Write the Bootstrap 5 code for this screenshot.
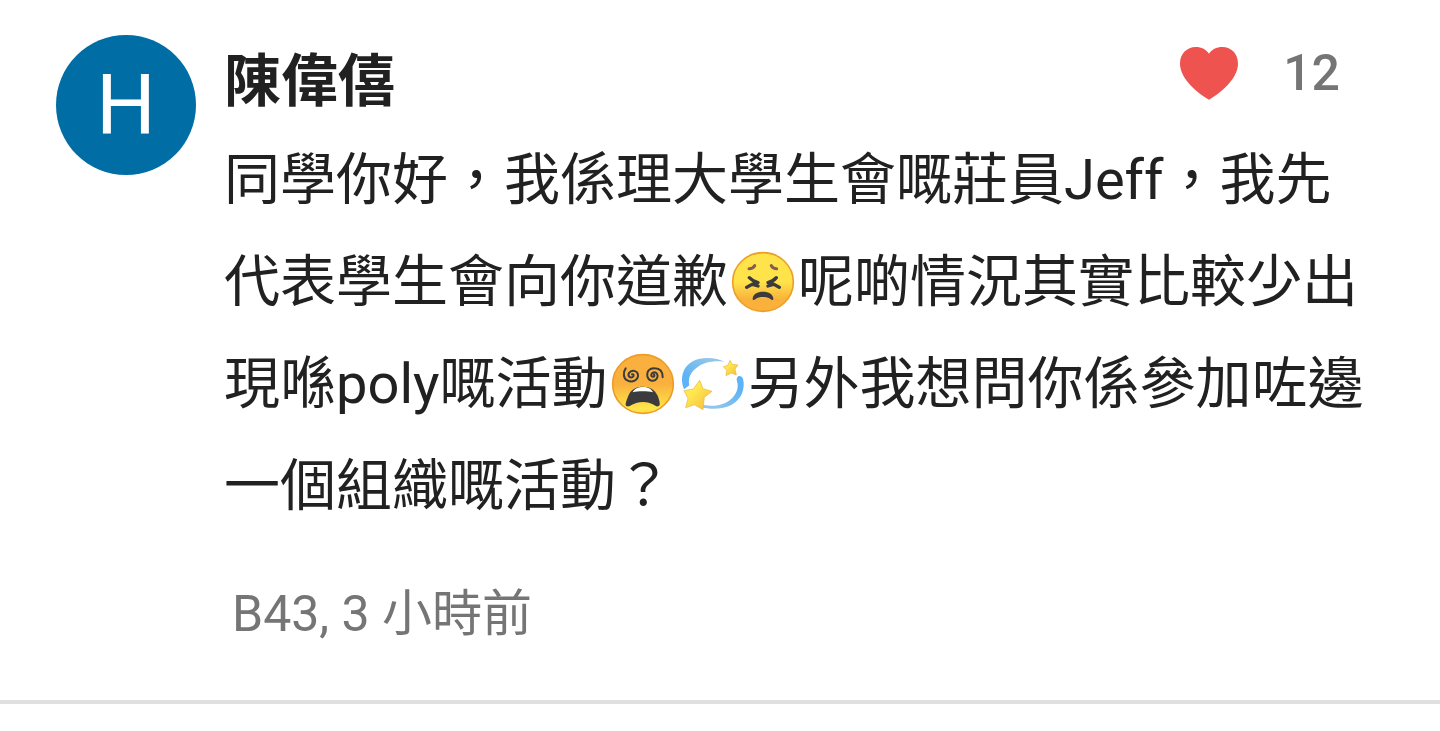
<!DOCTYPE html>
<html lang="zh-Hant-HK">
<head>
<meta charset="utf-8">
<meta name="viewport" content="width=device-width, initial-scale=1">
<title>留言</title>
<link rel="stylesheet" href="https://cdn.jsdelivr.net/npm/bootstrap@5.3.0/dist/css/bootstrap.min.css">
<style>
  body { font-family: Roboto, "Noto Sans CJK TC", sans-serif; color: #212121; background: #fff; }
  .comment { padding: 35px 64px 36px 56px; border-bottom: 4px solid #e0e0e0; gap: 28px; }
  .avatar { width: 140px; height: 140px; background: #006da5; font-size: 84px; line-height: 140px; }
  .author { font-size: 57px; line-height: 94px; }
  .message { font-size: 56px; line-height: 102px; }
  .emoji { width: 70px; height: 70px; vertical-align: -16px; }
  .like { color: #757575; font-size: 50px; line-height: 76px; gap: 44px; margin-right: 36px; }
  .heart { width: 60px; height: 56px; }
  .meta { color: #757575; font-size: 50px; line-height: 74px; padding: 40px 0 13px 8px; }
</style>
</head>
<body>
<main>
  <article class="comment d-flex align-items-start">
    <div class="avatar rounded-circle text-white text-center flex-shrink-0">H</div>
    <div class="flex-grow-1">
      <header class="d-flex justify-content-between align-items-start">
        <h1 class="author fw-bold m-0">陳偉僖</h1>
        <button type="button" class="like btn border-0 p-0 d-flex align-items-center fw-medium" aria-label="讚好 12">
          <svg class="heart" viewBox="54 44 180 168" aria-hidden="true"><path fill="#ef5350" d="M144 208C112 190 57 146 57 100C57 70 78 50 104 50C122 50 136 58 144 70C152 58 166 50 184 50C211 50 231 70 231 100C231 146 176 190 144 208Z"/></svg>
          <span>12</span>
        </button>
      </header>
      <p class="message m-0">同學你好，我係理大學生會嘅莊員Jeff，我先代表學生會向你道歉<svg class="emoji" viewBox="24 24 210 210" role="img" aria-label="難受">
          <defs><linearGradient id="yellow" x1="0" y1="0" x2="0" y2="1"><stop offset=".5" stop-color="#ffe34a"/><stop offset=".8" stop-color="#f9b13b"/></linearGradient></defs>
          <ellipse cx="129" cy="129" rx="91" ry="88" fill="url(#yellow)" stroke="#eda029" stroke-width="5"/>
          <g fill="none" stroke-linecap="round" stroke-linejoin="round">
            <path stroke="#855c52" stroke-width="9" d="M87 89Q99 89 104 80M154 80Q159 89 170 89"/>
            <path stroke="#3b3b3e" stroke-width="10" d="M88 116Q98 127 114 131Q96 134 80 145M98 136L114 141M169 116Q160 127 144 131Q162 134 178 145M160 136L144 141"/>
          </g>
          <path fill="#3b3b3e" d="M98 179C99 165 112 158 129 158C146 158 159 165 160 179C160 185 156 184 151 180C140 172 118 172 107 180C102 184 98 185 98 179Z"/>
        </svg>呢啲情況其實比較少出現喺poly嘅活動<svg class="emoji" viewBox="24 30 210 210" role="img" aria-label="暈眩的臉">
          <defs><linearGradient id="orange" x1="0" y1="0" x2="0" y2="1"><stop offset=".5" stop-color="#f9b03e"/><stop offset=".9" stop-color="#ffe34a"/></linearGradient></defs>
          <ellipse cx="129" cy="135" rx="91" ry="88" fill="url(#orange)" stroke="#ee9c25" stroke-width="5"/>
          <path fill="none" stroke="#3b3b3e" stroke-width="6" stroke-linecap="round" d="M77 88C69 99 69 119 82 124C97 132 115 123 114 108C113 94 94 91 87 102C82 112 91 118 98 114C103 111 101 104 96 106M188 115C188 98 181 88 164 88C149 87 140 96 142 111C145 127 164 130 171 118C176 107 170 100 162 100C153 101 151 112 158 113C163 114 165 109 162 107"/>
          <path fill="#3b3b3e" d="M82 202C72 201 79 186 85 170C93 150 110 143 129 143C149 143 165 152 173 170C179 185 183 201 174 202C165 204 159 189 129 189C99 189 92 204 82 202Z"/>
          <path fill="#fff" d="M98 160C103 149 115 144 129 144C143 144 154 149 159 160C143 156 114 156 98 160Z"/>
        </svg><svg class="emoji" viewBox="234 30 210 210" role="img" aria-label="流星">
          <defs>
            <linearGradient id="trailLeft" x1="0" y1="1" x2="1" y2="0"><stop offset=".25" stop-color="#5db3f7"/><stop offset=".8" stop-color="#91c6ea"/></linearGradient>
            <linearGradient id="trailRight" x1="0" y1="1" x2="1" y2="0"><stop offset=".2" stop-color="#91c6ea"/><stop offset=".75" stop-color="#5db3f7"/></linearGradient>
            <linearGradient id="star" x1="0" y1="0" x2="1" y2="1"><stop offset=".35" stop-color="#ffe84f"/><stop offset="1" stop-color="#f4b93e"/></linearGradient>
          </defs>
          <path fill="url(#trailLeft)" d="M252 151C239 119 247 84 278 67C306 52 348 55 374 68C343 64 310 69 290 86C269 102 264 119 268 139Z"/>
          <path fill="url(#trailRight)" d="M411 126C406 111 423 104 429 119C437 149 423 182 395 197C373 210 336 213 304 205L310 198C341 203 370 199 391 182C410 166 417 148 411 126Z"/>
          <g fill="url(#star)" stroke="#edb43c" stroke-width="2" stroke-linejoin="round">
            <path d="M299 124L309 149L336 157L313 175L309 212L283 197L257 206L264 178L252 155L280 150Z"/>
            <path d="M390 64L397 76L414 78L405 90L409 108L394 102L378 110L380 94L370 83L384 79Z"/>
          </g>
        </svg>另外我想問你係參加咗邊一個組織嘅活動？</p>
      <footer class="meta">B43, 3 小時前</footer>
    </div>
  </article>
</main>
<script src="https://cdn.jsdelivr.net/npm/bootstrap@5.3.0/dist/js/bootstrap.bundle.min.js"></script>
</body>
</html>
